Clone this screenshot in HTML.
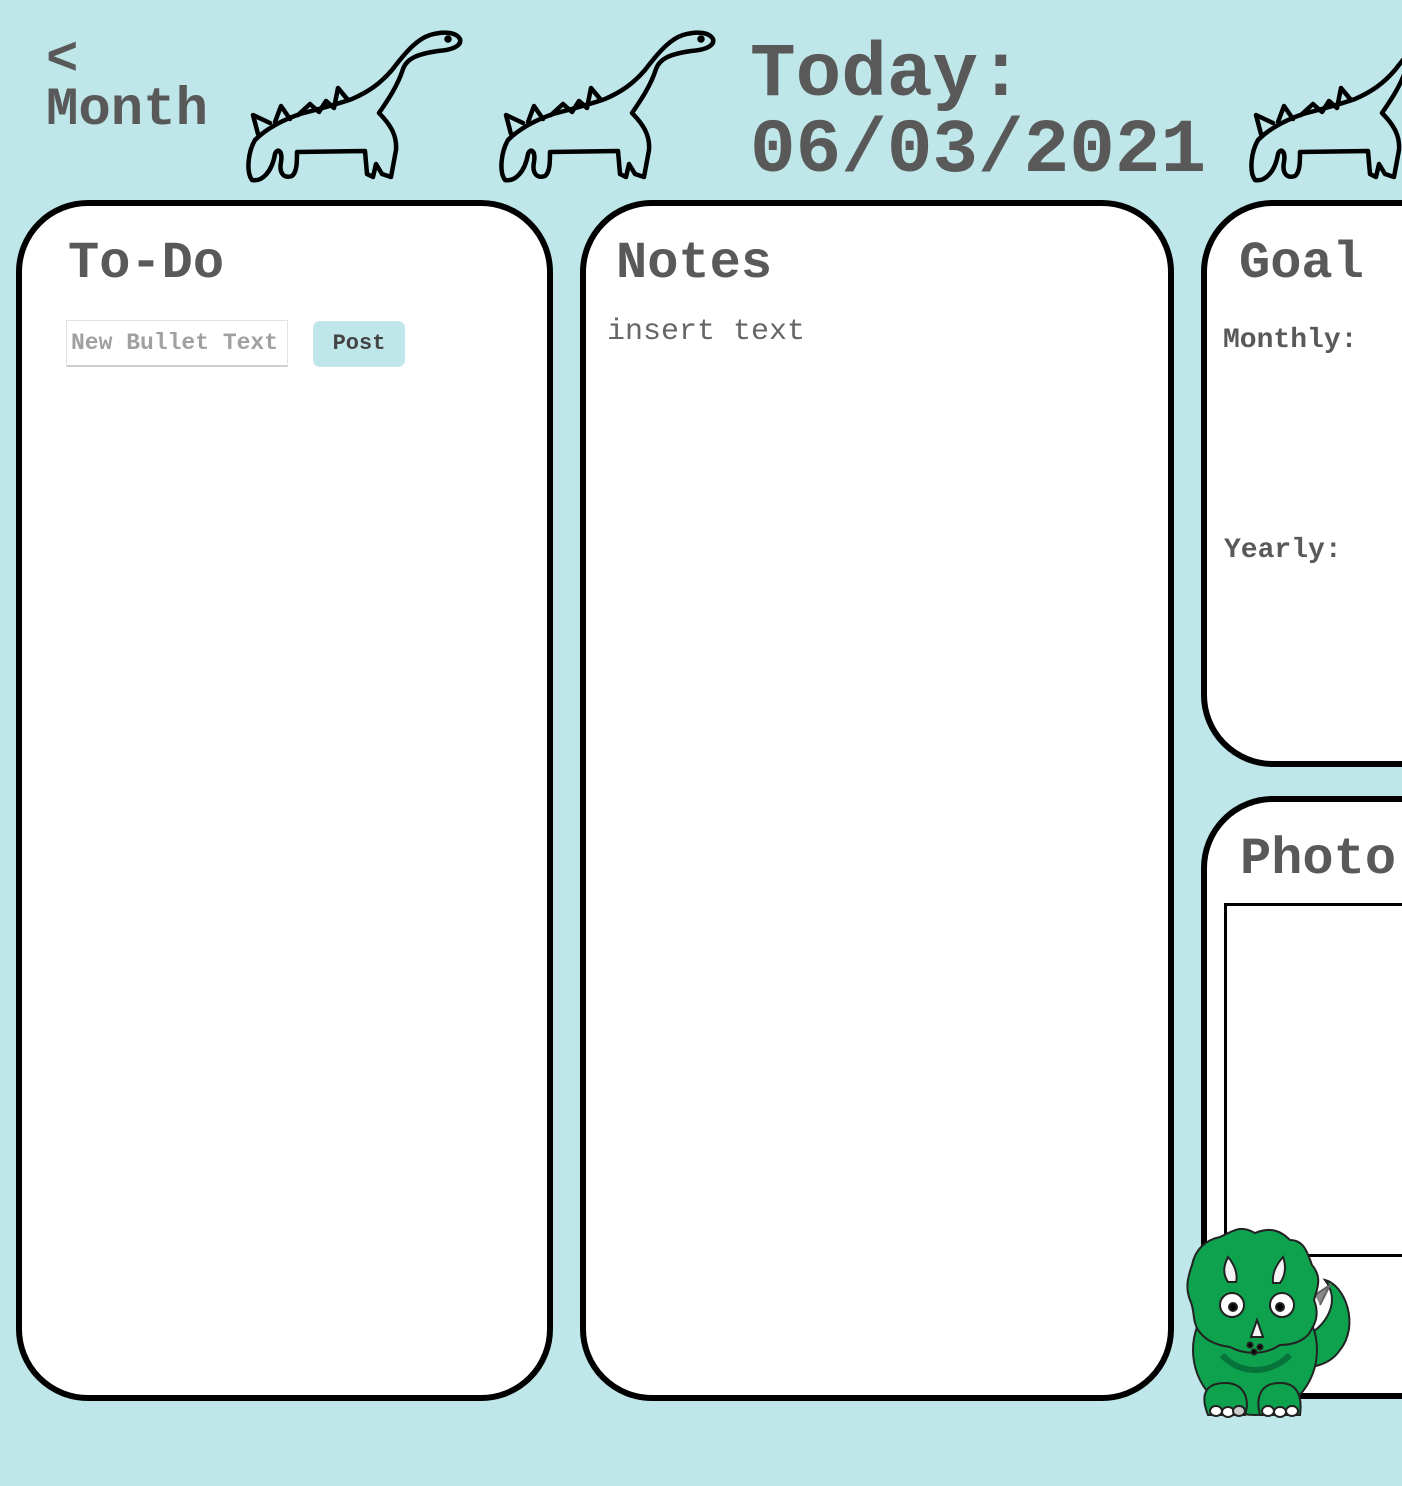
<!DOCTYPE html>
<html><head><meta charset="utf-8"><style>
html,body{margin:0;padding:0}
body{width:1402px;height:1486px;background:#bfe7e9;position:relative;overflow:hidden;font-family:"Liberation Mono","Courier New",monospace;color:#595959}
.abs{position:absolute}
.panel{position:absolute;background:#fff;border:6px solid #000;border-radius:72px;box-sizing:border-box}
.h{position:absolute;font-weight:bold;font-size:52px;line-height:52px;white-space:nowrap}
.dino{position:absolute;width:230px;height:170px}
</style></head><body>
<div class="abs" style="left:46px;top:36px;font-weight:bold;font-size:54px;line-height:50px">&lt;<br>Month</div>
<div class="abs" style="left:750px;top:37px;font-weight:bold;font-size:76px;line-height:76px">Today:<br>06/03/2021</div>

<svg width="0" height="0" style="position:absolute"><defs><g id="d" fill="none" stroke="#000" stroke-width="4.5" stroke-linejoin="round" stroke-linecap="round">
<path d="M15,118 C8,130 6,150 12,158 C22,160 32,150 35,132 C37,126 43,128 41,140 C39,150 43,157 52,154 C57,150 57,140 57,130 L125,129 L127,152 L133,155 L136,142 L142,152 L151,155 L156,128 C157,115 152,104 139,91 C148,78 158,63 163,47 C167,36 178,32 198,29 C212,28 222,24 220,17 C216,10 204,9 190,13 C178,17 168,27 152,48 C140,62 128,70 112,77 C95,83 75,88 60,92 C40,99 25,108 15,118 Z"/>
<path d="M18,112 L13,93 L30,101"/>
<path d="M35,100 L41,84 L50,97"/>
<path d="M58,93 L70,82 L79,90 L86,79 L94,86 L98,66 L108,78"/>
<circle cx="208" cy="17" r="1.5" fill="#000"/>
</g></defs></svg>
<svg class="dino" style="left:240px;top:22px" viewBox="0 0 230 170"><use href="#d"/></svg>
<svg class="dino" style="left:493px;top:22px" viewBox="0 0 230 170"><use href="#d"/></svg>
<svg class="dino" style="left:1243px;top:22px" viewBox="0 0 230 170"><use href="#d"/></svg>

<div class="panel" style="left:16px;top:200px;width:537px;height:1201px"></div>
<div class="h" style="left:68px;top:238px">To-Do</div>
<div class="abs" style="left:66px;top:320px;width:222px;height:47px;background:#fff;border:1px solid #e3e3e3;border-bottom:2px solid #cfcfcf;box-sizing:border-box;font-weight:bold;font-size:23px;line-height:45px;color:#a0a0a0;padding-left:4px;white-space:nowrap">New Bullet Text</div>
<div class="abs" style="left:313px;top:321px;width:92px;height:46px;background:#bfe7e9;border-radius:7px;font-weight:bold;font-size:22px;line-height:46px;text-align:center;color:#444">Post</div>

<div class="panel" style="left:580px;top:200px;width:594px;height:1201px"></div>
<div class="h" style="left:616px;top:238px">Notes</div>
<div class="abs" style="left:607px;top:315px;font-size:30px;line-height:34px;color:#666">insert text</div>

<div class="panel" style="left:1201px;top:200px;width:300px;height:567px"></div>
<div class="h" style="left:1239px;top:238px">Goal</div>
<div class="abs" style="left:1223px;top:326px;font-weight:bold;font-size:28px;line-height:30px">Monthly:</div>
<div class="abs" style="left:1224px;top:536px;font-weight:bold;font-size:28px;line-height:30px">Yearly:</div>

<div class="panel" style="left:1201px;top:796px;width:300px;height:603px"></div>
<div class="h" style="left:1240px;top:834px">Photo</div>
<div class="abs" style="left:1224px;top:903px;width:200px;height:354px;border:3px solid #000;box-sizing:border-box;background:#fff"></div>

<svg class="abs" style="left:1180px;top:1225px" width="185" height="200" viewBox="0 0 185 200">
<g stroke="#222" stroke-width="2">
<path d="M120,115 C150,100 160,75 145,55 C165,60 180,100 160,125 C150,140 130,145 115,140 Z" fill="#0ea24e"/>
<path d="M135,70 L150,60 L140,80" fill="#888" stroke="#666"/>
<ellipse cx="75" cy="125" rx="62" ry="65" fill="#0ea24e"/>
<path d="M40,12 C55,5 60,0 75,8 C90,2 100,5 110,15 C125,15 128,30 132,40 C142,52 138,62 134,75 C140,90 135,100 128,110 C120,118 110,120 100,120 C85,130 65,130 50,122 C35,120 25,115 18,105 C12,95 15,85 10,75 C5,62 8,52 12,40 C15,25 25,15 40,12 Z" fill="#0ea24e"/>
<path d="M42,130 C60,150 90,150 110,130" fill="none" stroke="#06733a" stroke-width="6"/>
<path d="M48,57 C42,48 44,40 48,32 C55,40 58,50 56,57 Z" fill="#f4f4f4"/>
<path d="M93,58 C92,48 96,40 103,32 C106,40 106,50 100,58 Z" fill="#f4f4f4"/>
<circle cx="52" cy="80" r="12" fill="#fff"/><circle cx="102" cy="80" r="12" fill="#fff"/>
<circle cx="53" cy="82" r="4" fill="#000"/><circle cx="100" cy="82" r="4" fill="#000"/>
<path d="M77,95 L83,112 L71,112 Z" fill="#f4f4f4"/>
<circle cx="70" cy="120" r="2.5" fill="#000"/><circle cx="80" cy="122" r="2.5" fill="#000"/><circle cx="74" cy="127" r="2.5" fill="#000"/>
<path d="M28,190 C20,170 25,158 45,158 C65,158 70,175 65,190 Z" fill="#0ea24e"/>
<path d="M80,190 C75,170 82,158 100,158 C120,158 122,175 120,190 Z" fill="#0ea24e"/>
<ellipse cx="36" cy="186" rx="6" ry="5" fill="#fff"/><ellipse cx="48" cy="187" rx="6" ry="5" fill="#fff"/><ellipse cx="59" cy="186" rx="6" ry="5" fill="#ccc"/>
<ellipse cx="88" cy="186" rx="6" ry="5" fill="#fff"/><ellipse cx="100" cy="187" rx="6" ry="5" fill="#fff"/><ellipse cx="112" cy="186" rx="6" ry="5" fill="#fff"/>
</g></svg>
</body></html>
